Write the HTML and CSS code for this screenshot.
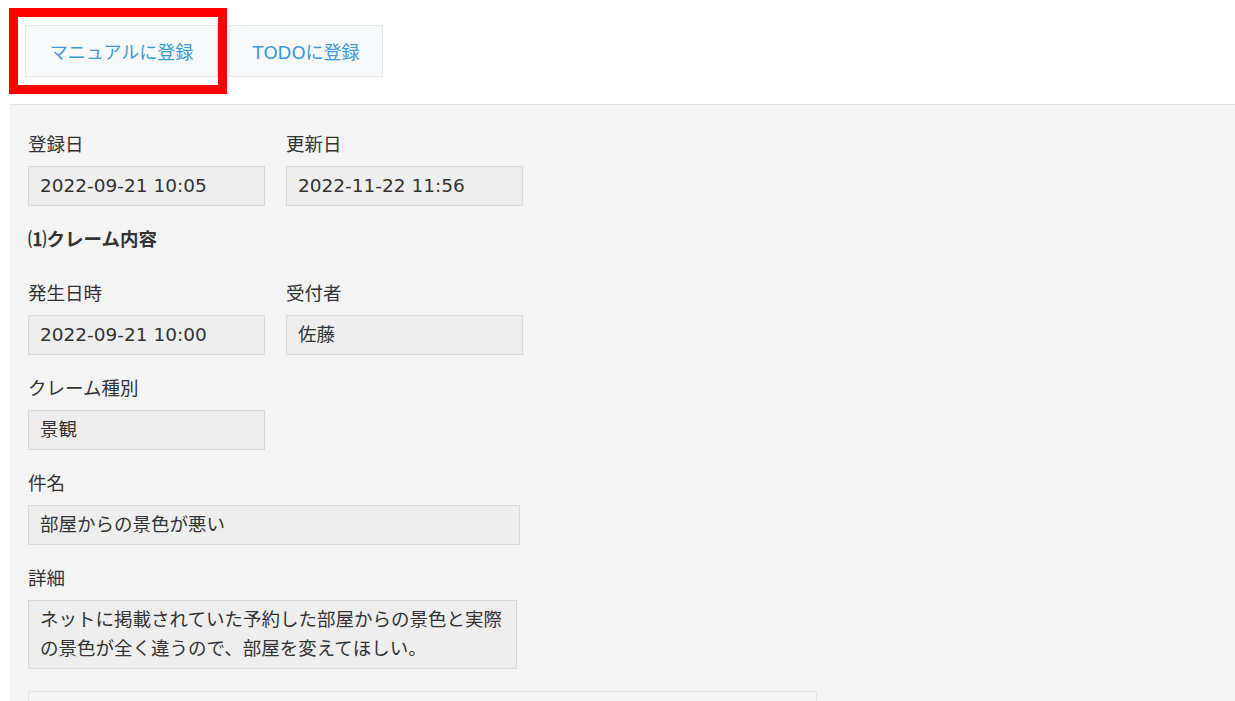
FILE: index.html
```html
<!DOCTYPE html>
<html>
  <head>
    <meta charset="utf-8">
    <title>クレーム詳細</title>
    <link rel="stylesheet" href="styles.css">
  </head>
  <body>
    <div class="toolbar">
      <button class="toolbar__btn toolbar__btn--manual">マニュアルに登録</button>
      <button class="toolbar__btn">TODOに登録</button>
      <div class="highlight"></div>
    </div>
    <div class="panel">
      <div class="row">
        <div class="field">
          <div class="field__label">登録日</div>
          <div class="field__value">2022-09-21 10:05</div>
        </div>
        <div class="field">
          <div class="field__label">更新日</div>
          <div class="field__value">2022-11-22 11:56</div>
        </div>
      </div>
      <h3 class="panel__header">⑴クレーム内容</h3>
      <div class="row">
        <div class="field">
          <div class="field__label">発生日時</div>
          <div class="field__value">2022-09-21 10:00</div>
        </div>
        <div class="field">
          <div class="field__label">受付者</div>
          <div class="field__value">佐藤</div>
        </div>
      </div>
      <div class="field">
        <div class="field__label">クレーム種別</div>
        <div class="field__value">景観</div>
      </div>
      <div class="field">
        <div class="field__label">件名</div>
        <div class="field__value field__value--wide">部屋からの景色が悪い</div>
      </div>
      <div class="field">
        <div class="field__label">詳細</div>
        <div class="field__value field__value--text">ネットに掲載されていた予約した部屋からの景色と実際<br>の景色が全く違うので、部屋を変えてほしい。</div>
      </div>
      <div class="subpanel"></div>
    </div>
  </body>
</html>
```

FILE: styles.css
```css
html {
  font-family: "DejaVu Sans", "Noto Sans CJK JP", sans-serif;
  background: #fff;
  margin: 0;
  padding: 0;
}

body {
  margin: 0;
  padding: 0;
  height: 701px;
  overflow: hidden;
}

.toolbar {
  position: relative;
  display: flex;
  gap: 11px;
  padding: 25px 0 0 25px;
  height: 52px;
  margin-bottom: 27px;
}

.toolbar__btn {
  font-family: inherit;
  font-size: 18px;
  color: #3a9ad9;
  background: #f7f9fa;
  border: 1px solid #e3e7e8;
  height: 52px;
  width: 154px;
  padding: 0;
  white-space: nowrap;
  cursor: pointer;
}

.toolbar__btn--manual {
  width: 193px;
}

.highlight {
  position: absolute;
  left: 9px;
  top: 8px;
  width: 200px;
  height: 68px;
  border: 9px solid #ff0000;
}

.panel {
  margin-left: 10px;
  background: #f4f4f4;
  border-top: 1px solid #e2e2e2;
  padding: 28px 18px 0;
  height: 600px;
  color: #333;
  font-size: 18.5px;
}

.row {
  display: flex;
  gap: 21px;
}

.field {
  margin-bottom: 22px;
}

.field__label {
  line-height: 24px;
  margin-bottom: 9px;
}

.field__value {
  box-sizing: border-box;
  width: 237px;
  height: 40px;
  line-height: 28px;
  padding: 5px 11px;
  background: #eeeeee;
  border: 1px solid #dadada;
  white-space: nowrap;
}

.field__value--wide {
  width: 492px;
}

.field__value--text {
  width: 489px;
  height: 69px;
  line-height: 29px;
  padding: 4px 11px;
}

.panel__header {
  font-size: 18.5px;
  font-weight: bold;
  line-height: 24px;
  margin: 0 0 30px;
}

.subpanel {
  width: 787px;
  height: 40px;
  background: #f5f5f5;
  border: 1px solid #e4e4e4;
}
```
